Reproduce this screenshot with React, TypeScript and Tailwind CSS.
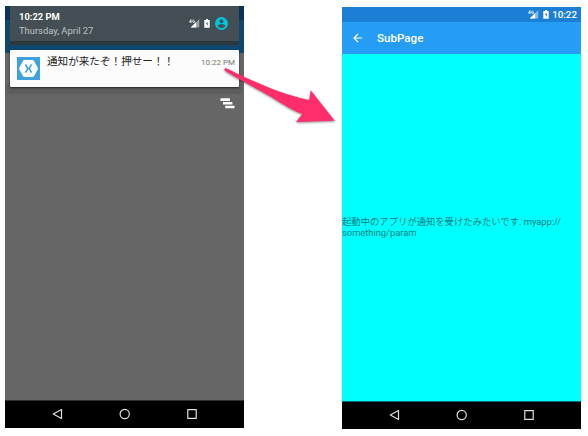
import React from 'react';

const font = "font-[Roboto,'Noto_Sans_CJK_JP',sans-serif]";

function Signal() {
  return (
    <svg width="11" height="9" viewBox="0 0 11 9" className="block shrink-0">
      <path d="M10.3 0v8.6H1.7z" fill="#fff" opacity="0.45" />
      <path d="M7.2 3.1v5.5H1.7z" fill="#fff" />
      <path d="M2 .6.5 3h2M2 .6v3.2M5.4 1.1H4.2l-.5.6v1.1l.5.6h1.2V2.3h-.7" fill="none" stroke="#fff" strokeWidth=".8" />
    </svg>
  );
}

function Battery() {
  return (
    <svg width="6" height="9" viewBox="0 0 6 9" className="block shrink-0">
      <path d="M2 0h2v1h1.7v7.7H.3V1H2z" fill="#fff" />
      <path d="M3.4 2.4 1.9 5h1v1.9L4.3 4.4h-.9z" fill="#4b6470" />
    </svg>
  );
}

function Avatar() {
  return (
    <svg width="13" height="13" viewBox="0 0 24 24" className="block shrink-0">
      <path
        fill="#00c5dc"
        d="M12 0a12 12 0 1 0 0 24 12 12 0 0 0 0-24zm0 4.2a3.7 3.7 0 1 1 0 7.4 3.7 3.7 0 0 1 0-7.4zm0 16.5c-3 0-5.7-1.5-7.2-3.9 0-2.4 4.8-3.7 7.2-3.7s7.2 1.3 7.2 3.7A8.6 8.6 0 0 1 12 20.7z"
      />
    </svg>
  );
}

function NavBar({ className }: { className: string }) {
  return (
    <div className={`flex shrink-0 justify-center bg-black ${className}`}>
      <svg width="146" height="12" viewBox="0 0 146 12" fill="none" stroke="#dedede" strokeWidth="1.2" className="block">
        <path d="M9.5 1.5v9L1.3 6z" strokeLinejoin="round" />
        <circle cx="72.7" cy="6" r="4.6" />
        <path d="M135.8 1.7h8.4v8.6h-8.4z" />
      </svg>
    </div>
  );
}

function NotificationPhone() {
  return (
    <div className="relative mt-[6px] ml-[5px] flex h-[422px] w-[239px] shrink-0 flex-col bg-[#666]">
      <div className="absolute inset-x-0 top-0 h-[14px] bg-[#093359]" />
      <div className="absolute inset-x-0 top-[14px] h-[33px] bg-[#10476f]" />
      <div className="absolute inset-x-[2px] top-[78px] h-[10px] bg-[#5d5d5d]" />
      <div className="relative mx-[5px] flex h-[35px] items-start justify-between bg-[#434f54] pl-[9px] pr-[11px]">
        <div className="pt-[4px]">
          <div className="h-[14px] text-[9.4px] leading-[14px] font-bold whitespace-nowrap text-white">10:22 PM</div>
          <div className="h-[13px] text-[9.4px] leading-[13px] whitespace-nowrap text-[#bcc3c6]">Thursday, April 27</div>
        </div>
        <div className="flex items-center pt-[11px]">
          <Signal />
          <div className="w-[4px]" />
          <Battery />
          <div className="w-[5px]" />
          <Avatar />
        </div>
      </div>
      <div className="relative mx-[5px] h-[4px] border-t border-[#28353a] bg-[#2b383e]" />
      <div className="relative mx-[5px] mt-[5px] flex h-[37px] rounded-[1px] bg-[#fcfcfc] pl-[7px] pr-[4px] shadow-[0_1px_2px_rgba(0,0,0,0.6)]">
        <svg width="23" height="23" viewBox="0 0 23 23" className="mt-[7px] block shrink-0">
          <path d="M0 0h23v23H0z" fill="#3ea2df" />
          <path d="M7.2 3h8.6l1 .6 4 7.1v1.5l-4 7.2-1 .6H7.2l-1-.6-4-7.2v-1.5l4-7.1z" fill="#fff" />
          <path d="m8.4 7.3 2.5 4.2-2.5 4.2M14.6 7.3l-2.5 4.2 2.5 4.2" fill="none" stroke="#3ea2df" strokeWidth="1.6" />
        </svg>
        <div className="ml-[7px] pt-[5px] text-[10.6px] leading-[14px] whitespace-nowrap text-[#222]">通知が来たぞ！押せー！！</div>
        <div className="ml-auto pt-[6px] text-[8px] leading-[13px] whitespace-nowrap text-[#777]">10:22 PM</div>
      </div>
      <div className="relative flex justify-end pt-[11px] pr-[9px]">
        <svg width="15" height="11" viewBox="0 0 15 11" className="block">
          <path d="M.5.3h9.4v2.6H.5zM3 4h9.4v2.6H3zM5.2 7.7h9.3v2.6H5.2z" fill="#fff" />
        </svg>
      </div>
      <div className="flex-1" />
      <NavBar className="h-[28px] border-t border-[#303030] pt-[7px]" />
    </div>
  );
}

function SubPagePhone() {
  return (
    <div className="mt-[7px] mr-[7px] ml-auto flex h-[422px] w-[239px] shrink-0 flex-col bg-[#00ffff]">
      <div className="flex h-[15px] items-center justify-end bg-[#1c7fd6] pr-[4px]">
        <Signal />
        <div className="w-[4px]" />
        <Battery />
        <div className="ml-[3px] text-[9.8px] leading-[15px] font-medium text-white">10:22</div>
      </div>
      <div className="flex h-[32px] items-center bg-[#269df4] pl-[11px]">
        <svg width="10" height="10" viewBox="0 0 10 10" fill="none" stroke="#fff" strokeWidth="1.2" className="block">
          <path d="M9.3 5H1.2M5 1 1 5l4 4" />
        </svg>
        <div className="ml-[14px] text-[11.6px] leading-[16px] font-medium text-white">SubPage</div>
      </div>
      <div className="flex-1 pt-[162px] text-[9.33px] leading-[11px] whitespace-nowrap text-[#008080]">
        <div>起動中のアプリが通知を受けたみたいです. myapp://</div>
        <div>something/param</div>
      </div>
      <NavBar className="h-[28px] border-t border-[#146b6b] pt-[7px]" />
    </div>
  );
}

export default function App() {
  return (
    <div className={`relative flex h-[436px] w-[588px] items-start overflow-hidden bg-white ${font}`}>
      <NotificationPhone />
      <SubPagePhone />
      <svg width="125" height="70" viewBox="220 62 125 70" className="absolute top-[62px] left-[220px] drop-shadow-[0_1px_1px_rgba(0,0,0,0.45)]">
        <path
          d="M226.2 68.3C233 71.4 239 74.6 246 77.8C266 86.5 286 95.3 309.3 100L310.7 90.3L334.8 120.7L296 122L302.3 114C290 109.5 281 103 271.7 97.3C259 90 243 81.8 225 70.8C224 69.4 224.8 68 226.2 68.3z"
          fill="#ff2d6b"
        />
      </svg>
    </div>
  );
}
